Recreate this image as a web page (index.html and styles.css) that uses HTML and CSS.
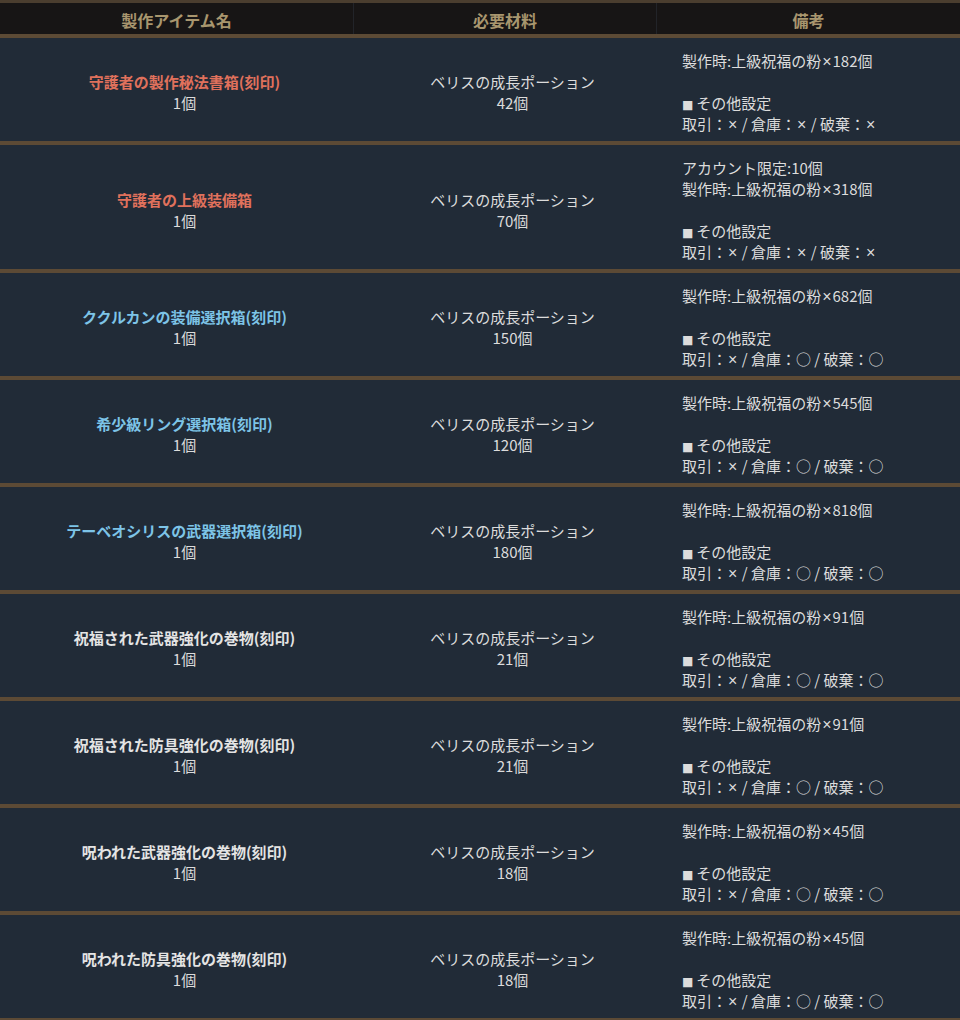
FILE: index.html
```html
<!DOCTYPE html>
<html lang="ja">
<head>
<meta charset="utf-8">
<title>製作アイテム</title>
<link rel="stylesheet" href="styles.css">
</head>
<body>
<div class="table">
  <div class="head">
    <div class="hcell">製作アイテム名</div>
    <div class="hcell sep">必要材料</div>
    <div class="hcell sep">備考</div>
  </div>

  <div class="row">
    <div class="cell name"><span class="item red">守護者の製作秘法書箱(刻印)</span><br>1個</div>
    <div class="cell mat">ベリスの成長ポーション<br>42個</div>
    <div class="cell note">製作時:上級祝福の粉<span class="x">×</span>182個<br>&nbsp;<br><span class="sq">■</span>その他設定<br>取引：<span class="x">×</span> / 倉庫：<span class="x">×</span> / 破棄：<span class="x">×</span></div>
  </div>

  <div class="row">
    <div class="cell name"><span class="item red">守護者の上級装備箱</span><br>1個</div>
    <div class="cell mat">ベリスの成長ポーション<br>70個</div>
    <div class="cell note">アカウント限定:10個<br>製作時:上級祝福の粉<span class="x">×</span>318個<br>&nbsp;<br><span class="sq">■</span>その他設定<br>取引：<span class="x">×</span> / 倉庫：<span class="x">×</span> / 破棄：<span class="x">×</span></div>
  </div>

  <div class="row">
    <div class="cell name"><span class="item blue">ククルカンの装備選択箱(刻印)</span><br>1個</div>
    <div class="cell mat">ベリスの成長ポーション<br>150個</div>
    <div class="cell note">製作時:上級祝福の粉<span class="x">×</span>682個<br>&nbsp;<br><span class="sq">■</span>その他設定<br>取引：<span class="x">×</span> / 倉庫：○ / 破棄：○</div>
  </div>

  <div class="row">
    <div class="cell name"><span class="item blue">希少級リング選択箱(刻印)</span><br>1個</div>
    <div class="cell mat">ベリスの成長ポーション<br>120個</div>
    <div class="cell note">製作時:上級祝福の粉<span class="x">×</span>545個<br>&nbsp;<br><span class="sq">■</span>その他設定<br>取引：<span class="x">×</span> / 倉庫：○ / 破棄：○</div>
  </div>

  <div class="row">
    <div class="cell name"><span class="item blue">テーベオシリスの武器選択箱(刻印)</span><br>1個</div>
    <div class="cell mat">ベリスの成長ポーション<br>180個</div>
    <div class="cell note">製作時:上級祝福の粉<span class="x">×</span>818個<br>&nbsp;<br><span class="sq">■</span>その他設定<br>取引：<span class="x">×</span> / 倉庫：○ / 破棄：○</div>
  </div>

  <div class="row">
    <div class="cell name"><span class="item white">祝福された武器強化の巻物(刻印)</span><br>1個</div>
    <div class="cell mat">ベリスの成長ポーション<br>21個</div>
    <div class="cell note">製作時:上級祝福の粉<span class="x">×</span>91個<br>&nbsp;<br><span class="sq">■</span>その他設定<br>取引：<span class="x">×</span> / 倉庫：○ / 破棄：○</div>
  </div>

  <div class="row">
    <div class="cell name"><span class="item white">祝福された防具強化の巻物(刻印)</span><br>1個</div>
    <div class="cell mat">ベリスの成長ポーション<br>21個</div>
    <div class="cell note">製作時:上級祝福の粉<span class="x">×</span>91個<br>&nbsp;<br><span class="sq">■</span>その他設定<br>取引：<span class="x">×</span> / 倉庫：○ / 破棄：○</div>
  </div>

  <div class="row">
    <div class="cell name"><span class="item white">呪われた武器強化の巻物(刻印)</span><br>1個</div>
    <div class="cell mat">ベリスの成長ポーション<br>18個</div>
    <div class="cell note">製作時:上級祝福の粉<span class="x">×</span>45個<br>&nbsp;<br><span class="sq">■</span>その他設定<br>取引：<span class="x">×</span> / 倉庫：○ / 破棄：○</div>
  </div>

  <div class="row">
    <div class="cell name"><span class="item white">呪われた防具強化の巻物(刻印)</span><br>1個</div>
    <div class="cell mat">ベリスの成長ポーション<br>18個</div>
    <div class="cell note">製作時:上級祝福の粉<span class="x">×</span>45個<br>&nbsp;<br><span class="sq">■</span>その他設定<br>取引：<span class="x">×</span> / 倉庫：○ / 破棄：○</div>
  </div>
</div>
</body>
</html>
```

FILE: styles.css
```css
html, body {
  margin: 0;
  padding: 0;
  background: #212b37;
}
body {
  font-family: "Noto Sans CJK JP", "Noto Sans", sans-serif;
  font-size: 15px;
  color: #dcdcdc;
}
.table {
  width: 960px;
  border-top: 3px solid #4b3e2f;
}
.head {
  display: grid;
  grid-template-columns: 353px 303px 1fr;
  background: #171515;
  border-bottom: 4px solid #5c4a35;
}
.hcell {
  height: 31px;
  box-sizing: border-box;
  padding-top: 5px;
  text-align: center;
  font-size: 16px;
  font-weight: bold;
  line-height: 24px;
  color: #a8966e;
}
.hcell.sep {
  border-left: 1px solid #222429;
}
.row {
  display: grid;
  grid-template-columns: 369px 287px 1fr;
  border-bottom: 4px solid #5c4a35;
}
.cell {
  padding: 12px 0 7px;
  line-height: 21px;
}
.name, .mat {
  text-align: center;
  align-self: center;
}
.note {
  padding-left: 26px;
  text-align: left;
}
.x {
  font-family: "Liberation Sans", "DejaVu Sans", sans-serif;
  font-size: 16px;
  line-height: 0;
  margin: 0 1px;
}
.sq {
  font-family: "DejaVu Sans", sans-serif;
  font-size: 12px;
  line-height: 0;
  margin-right: 3px;
}
.item {
  font-weight: bold;
}
.red { color: #e0715c; }
.blue { color: #7dc4e7; }
.white { color: #e4e4e4; }
```
